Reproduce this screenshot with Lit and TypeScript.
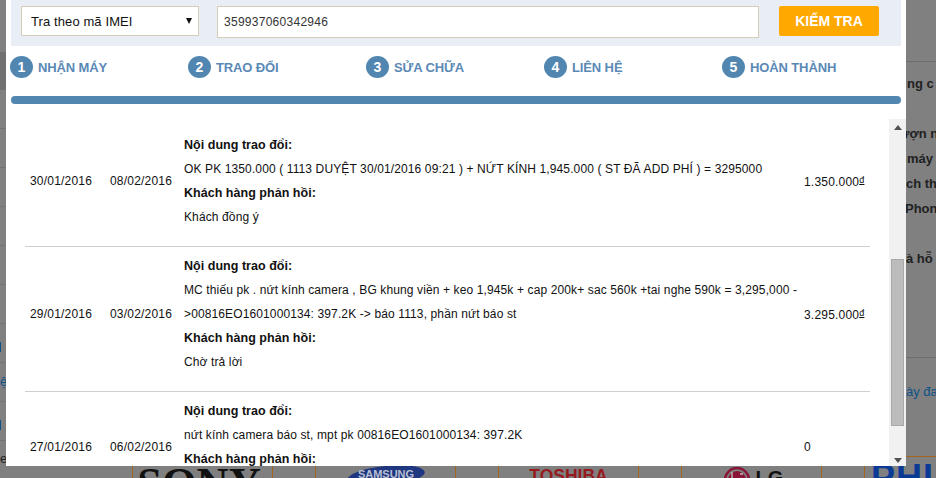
import { LitElement, html, css } from "lit";
import { customElement } from "lit/decorators.js";

const STEPS = ["NHẬN MÁY", "TRAO ĐỔI", "SỬA CHỮA", "LIÊN HỆ", "HOÀN THÀNH"];
const ROWS = [
  { a: "30/01/2016", b: "08/02/2016", talk: "OK PK 1350.000 ( 1113 DUYỆT 30/01/2016 09:21 ) + NỨT KÍNH 1,945.000 ( ST ĐÃ ADD PHÍ ) = 3295000", reply: "Khách đồng ý", price: "1.350.000", unit: true },
  { a: "29/01/2016", b: "03/02/2016", talk: "MC thiếu pk . nứt kính camera , BG khung viền + keo 1,945k + cap 200k+ sac 560k +tai nghe 590k = 3,295,000 ->00816EO1601000134: 397.2K -> báo 1113, phần nứt báo st", reply: "Chờ trả lời", price: "3.295.000", unit: true },
  { a: "27/01/2016", b: "06/02/2016", talk: "nứt kính camera báo st, mpt pk 00816EO1601000134: 397.2K", reply: "", price: "0", unit: false },
];
const RIGHT = [
  { t: "ng c", x: 7 },
  { t: "", x: 0 },
  { t: "ượn n", x: -1 },
  { t: "máy", x: 7 },
  { t: "ch th", x: 6 },
  { t: "Phon", x: 5 },
  { t: "", x: 0 },
  { t: "à hỗ", x: 6 },
];

@customElement("app-root")
export class AppRoot extends LitElement {
  static styles = css`
    :host { display: block; width: 936px; height: 478px; position: relative; overflow: hidden; background: #808080; font-family: "Liberation Sans", Arial, sans-serif; color: #111; }
    .under { position: absolute; inset: 0; overflow: hidden; }
    .left-rail { position: absolute; left: 0; top: 0; width: 6px; display: flex; flex-direction: column; }
    .band { margin-top: 52px; height: 38px; background: #707070; }
    .slot { height: 38px; border-bottom: 1px solid #747474; overflow: hidden; color: #0d5288; font-size: 13px; line-height: 38px; white-space: nowrap; }
    .slot.dark { color: #222; line-height: 36px; }
    .mark { display: block; width: 1px; height: 10px; margin-top: 18px; background: #0d5288; }
    .right-rail { position: absolute; left: 900px; right: 0; top: 0; display: flex; flex-direction: column; overflow: hidden; }
    .spacer { height: 71px; }
    .rule { position: absolute; left: 900px; right: 0; height: 1px; background: #6e6e6e; }
    .r1 { top: 61px; }
    .r2 { top: 357px; }
    .rtext { font-size: 13px; font-weight: 700; color: #1f1f1f; white-space: nowrap; height: 25px; line-height: 25px; }
    .blue-text { position: absolute; left: 906px; top: 384px; font-size: 13px; color: #0d5288; white-space: nowrap; }
    .logos { position: absolute; left: 132px; top: 456px; display: flex; gap: 42px; height: 30px; }
    .logo { width: 141px; box-sizing: border-box; height: 30px; border: 1px solid #a5651f; display: flex; justify-content: center; padding-top: 9px; overflow: hidden; }
    .sony { font: 700 44.5px/34px "Liberation Serif", serif; color: #111; margin-left: -7px; }
    .toshiba { font: 700 17.5px/22px "Liberation Sans", sans-serif; color: #961a1e; margin-top: -1px; }
    .samsung { margin-top: -1px; }
    .lg { display: flex; gap: 6px; align-items: flex-start; font: 700 20px/22px "Liberation Sans", sans-serif; color: #111; padding-top: 1px; margin-left: 4px; }
    .philips { font: 700 36px/30px "Liberation Sans", sans-serif; color: #0b3a96; align-self: flex-start; letter-spacing: 1px; margin-left: 6px; }
    .phil-cell { justify-content: flex-start; width: 200px; border-right: 0; padding-top: 6px; }

    .modal { position: absolute; left: 6px; top: 0; width: 900px; height: 466px; background: #fff; display: flex; flex-direction: column; overflow: hidden; }
    .search { margin: 0 5px; height: 46px; flex: none; background: #e9edf5; display: flex; align-items: flex-start; padding: 6px 0 0 10px; box-sizing: border-box; }
    .select { width: 178px; height: 30px; box-sizing: border-box; border: 1px solid #d6cdb6; background: #fff; display: flex; align-items: center; justify-content: space-between; padding: 0 6px 0 9px; font-size: 13px; letter-spacing: 0.1px; color: #111; }
    .caret { width: 0; height: 0; border: 3.5px solid transparent; border-top: 6px solid #111; border-bottom: 0; }
    .input { width: 542px; height: 32px; margin-left: 18px; box-sizing: border-box; border: 1px solid #d6cdb6; background: #fff; padding-left: 6px; display: flex; align-items: center; font-size: 12px; color: #333; letter-spacing: 0.27px; }
    .btn { width: 100px; height: 30px; margin-left: 20px; border-radius: 2px; background: #ffa800; color: #fff; font-weight: 700; font-size: 14px; display: flex; align-items: center; justify-content: center; }
    .steps { display: flex; margin: 10px 0 0 4px; height: 22px; flex: none; }
    .step { width: 178px; display: flex; align-items: center; gap: 5px; color: #5a89b6; font-weight: 700; font-size: 13px; letter-spacing: -0.12px; }
    .num { width: 23px; height: 22px; border-radius: 50%; background: #5186b0; color: #fff; font-size: 14px; letter-spacing: 0; display: flex; align-items: center; justify-content: center; }
    .bar { margin: 18px 5px 0; height: 8px; flex: none; border-radius: 4px; background: #5186b0; }
    .scroll { margin-top: 15px; flex: 1; display: flex; min-height: 0; }
    .list { flex: 1; overflow: hidden; margin: 7px 19px 0; min-width: 0; }
    .row { display: grid; grid-template-columns: 80px 74px 620px 1fr; padding: 7px 0 17px 5px; align-items: center; border-bottom: 1px solid #cfcfcf; font-size: 12px; line-height: 24px; letter-spacing: 0.12px; }
    .row:last-child { border-bottom: 0; }
    .date { letter-spacing: 0.2px; }
    .talk b { display: block; font-size: 12.5px; letter-spacing: 0.03px; }
    .price { letter-spacing: 0.2px; white-space: nowrap; }
    .price u { font-size: 9px; vertical-align: 3px; }
    .track { width: 17px; flex: none; background: #f1f1f1; display: flex; flex-direction: column; align-items: center; }
    .up { margin-top: 6px; width: 0; height: 0; border: 4px solid transparent; border-bottom: 5px solid #505050; border-top: 0; }
    .thumb { margin-top: 129px; width: 13px; height: 167px; flex: none; box-sizing: border-box; background: #bcbcbc; border: 1px solid #a9a9a9; }
    .down { margin-top: 32px; width: 0; height: 0; border: 4px solid transparent; border-top: 5px solid #505050; border-bottom: 0; }
  `;

  render() {
    return html`
      <div class="under">
        <div class="left-rail">
          <div class="band"></div>
          ${["", "", "", "", "", "", "|", "ệp", "|", "eu"].map((t, i) => html`<div class="slot ${i === 9 ? "dark" : ""}">${t === "|" ? html`<span class="mark"></span>` : t}</div>`)}
        </div>
        <div class="rule r1"></div>
        <div class="rule r2"></div>
        <div class="right-rail">
          <div class="spacer"></div>
          ${RIGHT.map((r) => html`<div class="rtext" style="padding-left:${r.x}px">${r.t}</div>`)}
        </div>
        <div class="blue-text">ày đa</div>
        <div class="logos">
          <div class="logo"><span class="sony">SONY</span></div>
          <div class="logo">
            <svg class="samsung" width="80" height="22" viewBox="0 0 80 22"><ellipse cx="40" cy="11" rx="39" ry="10" fill="#1f3680" transform="rotate(-6 40 11)"></ellipse><text x="40" y="13" text-anchor="middle" font-family="Liberation Sans" font-weight="700" font-size="11" fill="#b9c0d2">SAMSUNG</text></svg>
          </div>
          <div class="logo"><span class="toshiba">TOSHIBA</span></div>
          <div class="logo">
            <span class="lg">
              <svg width="26" height="26" viewBox="0 0 26 26"><circle cx="13" cy="13" r="12" fill="none" stroke="#8a1436" stroke-width="2.5"></circle><circle cx="13" cy="13" r="9" fill="#8a1436"></circle><path d="M8 5v7h4M16 7h3" stroke="#bbb" stroke-width="1.4" fill="none"></path></svg>
              LG
            </span>
          </div>
          <div class="logo phil-cell"><span class="philips">PHILIPS</span></div>
        </div>
      </div>

      <div class="modal">
        <div class="search">
          <div class="select"><span>Tra theo mã IMEI</span><span class="caret"></span></div>
          <div class="input">359937060342946</div>
          <div class="btn">KIỂM TRA</div>
        </div>
        <div class="steps">
          ${STEPS.map((s, i) => html`<div class="step"><span class="num">${i + 1}</span><span>${s}</span></div>`)}
        </div>
        <div class="bar"></div>
        <div class="scroll">
          <div class="list">
            ${ROWS.map((r) => html`
              <div class="row">
                <div class="date">${r.a}</div>
                <div class="date">${r.b}</div>
                <div class="talk">
                  <b>Nội dung trao đổi:</b>
                  <div>${r.talk}</div>
                  <b>Khách hàng phản hồi:</b>
                  <div>${r.reply || "\u00a0"}</div>
                </div>
                <div class="price">${r.price}${r.unit ? html`<u>đ</u>` : ""}</div>
              </div>`)}
          </div>
          <div class="track">
            <span class="up"></span>
            <span class="thumb"></span>
            <span class="down"></span>
          </div>
        </div>
      </div>
    `;
  }
}
